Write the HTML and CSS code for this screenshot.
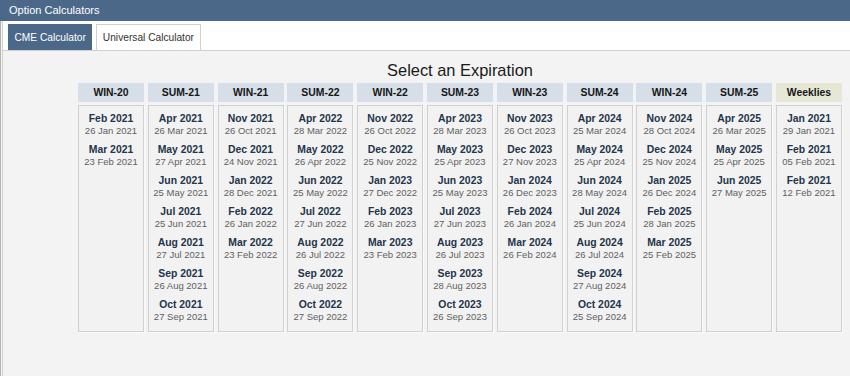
FILE: index.html
```html
<!DOCTYPE html>
<html lang="en">
<head>
<meta charset="utf-8">
<title>Option Calculators</title>
<link rel="stylesheet" href="styles.css">
</head>
<body>
<header class="titlebar">Option Calculators</header>
<div class="frame">
  <div class="panel">
    <nav class="tabs">
      <span class="tab active">CME Calculator</span>
      <span class="tab">Universal Calculator</span>
    </nav>
    <main class="content">
      <div class="picker">
        <h1 class="heading">Select an Expiration</h1>
        <div class="grid">
          <section class="col">
            <div class="col-head">WIN-20</div>
            <div class="col-body">
              <div class="entry"><div class="m">Feb 2021</div><div class="d">26 Jan 2021</div></div>
              <div class="entry"><div class="m">Mar 2021</div><div class="d">23 Feb 2021</div></div>
            </div>
          </section>
          <section class="col">
            <div class="col-head">SUM-21</div>
            <div class="col-body">
              <div class="entry"><div class="m">Apr 2021</div><div class="d">26 Mar 2021</div></div>
              <div class="entry"><div class="m">May 2021</div><div class="d">27 Apr 2021</div></div>
              <div class="entry"><div class="m">Jun 2021</div><div class="d">25 May 2021</div></div>
              <div class="entry"><div class="m">Jul 2021</div><div class="d">25 Jun 2021</div></div>
              <div class="entry"><div class="m">Aug 2021</div><div class="d">27 Jul 2021</div></div>
              <div class="entry"><div class="m">Sep 2021</div><div class="d">26 Aug 2021</div></div>
              <div class="entry"><div class="m">Oct 2021</div><div class="d">27 Sep 2021</div></div>
            </div>
          </section>
          <section class="col">
            <div class="col-head">WIN-21</div>
            <div class="col-body">
              <div class="entry"><div class="m">Nov 2021</div><div class="d">26 Oct 2021</div></div>
              <div class="entry"><div class="m">Dec 2021</div><div class="d">24 Nov 2021</div></div>
              <div class="entry"><div class="m">Jan 2022</div><div class="d">28 Dec 2021</div></div>
              <div class="entry"><div class="m">Feb 2022</div><div class="d">26 Jan 2022</div></div>
              <div class="entry"><div class="m">Mar 2022</div><div class="d">23 Feb 2022</div></div>
            </div>
          </section>
          <section class="col">
            <div class="col-head">SUM-22</div>
            <div class="col-body">
              <div class="entry"><div class="m">Apr 2022</div><div class="d">28 Mar 2022</div></div>
              <div class="entry"><div class="m">May 2022</div><div class="d">26 Apr 2022</div></div>
              <div class="entry"><div class="m">Jun 2022</div><div class="d">25 May 2022</div></div>
              <div class="entry"><div class="m">Jul 2022</div><div class="d">27 Jun 2022</div></div>
              <div class="entry"><div class="m">Aug 2022</div><div class="d">26 Jul 2022</div></div>
              <div class="entry"><div class="m">Sep 2022</div><div class="d">26 Aug 2022</div></div>
              <div class="entry"><div class="m">Oct 2022</div><div class="d">27 Sep 2022</div></div>
            </div>
          </section>
          <section class="col">
            <div class="col-head">WIN-22</div>
            <div class="col-body">
              <div class="entry"><div class="m">Nov 2022</div><div class="d">26 Oct 2022</div></div>
              <div class="entry"><div class="m">Dec 2022</div><div class="d">25 Nov 2022</div></div>
              <div class="entry"><div class="m">Jan 2023</div><div class="d">27 Dec 2022</div></div>
              <div class="entry"><div class="m">Feb 2023</div><div class="d">26 Jan 2023</div></div>
              <div class="entry"><div class="m">Mar 2023</div><div class="d">23 Feb 2023</div></div>
            </div>
          </section>
          <section class="col">
            <div class="col-head">SUM-23</div>
            <div class="col-body">
              <div class="entry"><div class="m">Apr 2023</div><div class="d">28 Mar 2023</div></div>
              <div class="entry"><div class="m">May 2023</div><div class="d">25 Apr 2023</div></div>
              <div class="entry"><div class="m">Jun 2023</div><div class="d">25 May 2023</div></div>
              <div class="entry"><div class="m">Jul 2023</div><div class="d">27 Jun 2023</div></div>
              <div class="entry"><div class="m">Aug 2023</div><div class="d">26 Jul 2023</div></div>
              <div class="entry"><div class="m">Sep 2023</div><div class="d">28 Aug 2023</div></div>
              <div class="entry"><div class="m">Oct 2023</div><div class="d">26 Sep 2023</div></div>
            </div>
          </section>
          <section class="col">
            <div class="col-head">WIN-23</div>
            <div class="col-body">
              <div class="entry"><div class="m">Nov 2023</div><div class="d">26 Oct 2023</div></div>
              <div class="entry"><div class="m">Dec 2023</div><div class="d">27 Nov 2023</div></div>
              <div class="entry"><div class="m">Jan 2024</div><div class="d">26 Dec 2023</div></div>
              <div class="entry"><div class="m">Feb 2024</div><div class="d">26 Jan 2024</div></div>
              <div class="entry"><div class="m">Mar 2024</div><div class="d">26 Feb 2024</div></div>
            </div>
          </section>
          <section class="col">
            <div class="col-head">SUM-24</div>
            <div class="col-body">
              <div class="entry"><div class="m">Apr 2024</div><div class="d">25 Mar 2024</div></div>
              <div class="entry"><div class="m">May 2024</div><div class="d">25 Apr 2024</div></div>
              <div class="entry"><div class="m">Jun 2024</div><div class="d">28 May 2024</div></div>
              <div class="entry"><div class="m">Jul 2024</div><div class="d">25 Jun 2024</div></div>
              <div class="entry"><div class="m">Aug 2024</div><div class="d">26 Jul 2024</div></div>
              <div class="entry"><div class="m">Sep 2024</div><div class="d">27 Aug 2024</div></div>
              <div class="entry"><div class="m">Oct 2024</div><div class="d">25 Sep 2024</div></div>
            </div>
          </section>
          <section class="col">
            <div class="col-head">WIN-24</div>
            <div class="col-body">
              <div class="entry"><div class="m">Nov 2024</div><div class="d">28 Oct 2024</div></div>
              <div class="entry"><div class="m">Dec 2024</div><div class="d">25 Nov 2024</div></div>
              <div class="entry"><div class="m">Jan 2025</div><div class="d">26 Dec 2024</div></div>
              <div class="entry"><div class="m">Feb 2025</div><div class="d">28 Jan 2025</div></div>
              <div class="entry"><div class="m">Mar 2025</div><div class="d">25 Feb 2025</div></div>
            </div>
          </section>
          <section class="col">
            <div class="col-head">SUM-25</div>
            <div class="col-body">
              <div class="entry"><div class="m">Apr 2025</div><div class="d">26 Mar 2025</div></div>
              <div class="entry"><div class="m">May 2025</div><div class="d">25 Apr 2025</div></div>
              <div class="entry"><div class="m">Jun 2025</div><div class="d">27 May 2025</div></div>
            </div>
          </section>
          <section class="col">
            <div class="col-head weekly">Weeklies</div>
            <div class="col-body">
              <div class="entry"><div class="m">Jan 2021</div><div class="d">29 Jan 2021</div></div>
              <div class="entry"><div class="m">Feb 2021</div><div class="d">05 Feb 2021</div></div>
              <div class="entry"><div class="m">Feb 2021</div><div class="d">12 Feb 2021</div></div>
            </div>
          </section>
        </div>
      </div>
    </main>
  </div>
</div>
</body>
</html>
```
FILE: styles.css
```css
* { box-sizing: border-box; }
html, body {
  margin: 0;
  padding: 0;
  height: 100%;
}
body {
  font-family: "Liberation Sans", Arial, sans-serif;
  background: #f3f3f3;
  color: #222;
  display: flex;
  flex-direction: column;
  overflow: hidden;
}
.titlebar {
  height: 21px;
  background: #4b6889;
  color: #fff;
  font-size: 11px;
  line-height: 21px;
  padding-left: 9px;
  flex: none;
}
.frame {
  flex: 1;
  border-left: 1px solid #b3b3b3;
  display: flex;
}
.panel {
  flex: 1;
  margin-left: 1px;
  border-left: 1px solid #d2d2d2;
  display: flex;
  flex-direction: column;
}
.tabs {
  display: flex;
  gap: 4px;
  padding: 3px 0 0 5px;
  background: #fff;
  border-bottom: 1px solid #cfcfcf;
  height: 30px;
  flex: none;
}
.tab {
  display: flex;
  align-items: center;
  padding: 0 5.5px;
  font-size: 10.2px;
  color: #333;
  background: #fff;
  border: 1px solid #d0d0d0;
  border-bottom: none;
  height: 26px;
}
.tab.active {
  background: #4b6889;
  border-color: #4b6889;
  color: #fff;
}
.content {
  flex: 1;
  background: #f3f3f3;
}
.picker {
  margin-left: 75px;
  width: 764px;
  padding-top: 9px;
}
.heading {
  margin: 0 0 2px;
  font-size: 16.4px;
  font-weight: normal;
  line-height: 21px;
  text-align: center;
  color: #1a1a1a;
}
.grid {
  display: grid;
  grid-template-columns: repeat(11, 66px);
  column-gap: 3.8px;
  align-items: stretch;
}
.col {
  display: flex;
  flex-direction: column;
}
.col-head {
  height: 19px;
  line-height: 19px;
  background: #d6dee7;
  text-align: center;
  font-size: 10.4px;
  font-weight: bold;
  color: #161616;
  margin-bottom: 2.5px;
}
.col-head.weekly {
  background: #e7e7d6;
}
.col-body {
  flex: 1;
  border: 1px solid #d0d0d0;
  background: #f2f2f2;
  box-shadow: 1px 1px 0 #fafafa;
  padding: 7px 0 1px;
  text-align: center;
}
.entry {
  padding-bottom: 7px;
}
.m {
  font-size: 10.4px;
  font-weight: bold;
  line-height: 12px;
  color: #22354a;
}
.d {
  font-size: 9.5px;
  line-height: 12px;
  color: #5f5f5f;
}
```
